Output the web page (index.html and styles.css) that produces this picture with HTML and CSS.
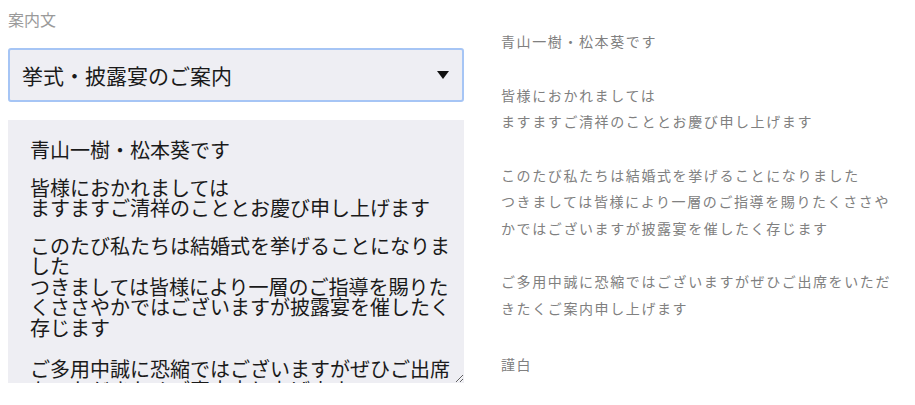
FILE: index.html
```html
<!DOCTYPE html>
<html>
<head>
    <meta charset="utf-8"/>
    <title>案内文</title>
    <link rel="stylesheet" href="styles.css">
</head>
<body>
    <div id="app">
        <div class="editor">
            <label class="field-label" for="template">案内文</label>
            <div class="select-wrap">
                <select id="template" class="template-select">
                    <option>挙式・披露宴のご案内</option>
                    <option>披露宴のご案内</option>
                    <option>1.5次会のご案内</option>
                </select>
            </div>
            <div class="memo">
                <p>青山一樹・松本葵です</p>
                <p>皆様におかれましては<br>ますますご清祥のこととお慶び申し上げます</p>
                <p class="long">このたび私たちは結婚式を挙げることになりました<br>つきましては皆様により一層のご指導を賜りたくささやかではございますが披露宴を催したく存じます</p>
                <p>ご多用中誠に恐縮ではございますがぜひご出席をいただきたくご案内申し上げます</p>
                <p>謹白</p>
            </div>
        </div>
        <div class="preview">
            <p>青山一樹・松本葵です</p>
            <p>皆様におかれましては<br>ますますご清祥のこととお慶び申し上げます</p>
            <p>このたび私たちは結婚式を挙げることになりました<br>つきましては皆様により一層のご指導を賜りたくささやかではございますが披露宴を催したく存じます</p>
            <p>ご多用中誠に恐縮ではございますがぜひご出席をいただきたくご案内申し上げます</p>
            <p class="closing">謹白</p>
        </div>
    </div>
</body>
</html>
```

FILE: styles.css
```css
body {
    margin: 0;
    font-family: "Noto Sans CJK JP", "Noto Sans", sans-serif;
    background-color: white;
    color: #111;
}
#app {
    display: flex;
    align-items: flex-start;
    gap: 37px;
    padding-left: 8px;
}
.editor {
    width: 456px;
    display: flex;
    flex-direction: column;
}
.field-label {
    margin-top: 8px;
    font-size: 16px;
    line-height: 22px;
    color: #9a9a9a;
}
.select-wrap {
    position: relative;
    margin-top: 18px;
}
.select-wrap::after {
    content: "";
    position: absolute;
    right: 15px;
    top: 23px;
    border-left: 6px solid transparent;
    border-right: 6px solid transparent;
    border-top: 8px solid #111;
    pointer-events: none;
}
.template-select {
    appearance: none;
    -webkit-appearance: none;
    width: 100%;
    height: 54px;
    margin: 0;
    padding: 0 40px 0 12px;
    border: 2px solid #a6c5f5;
    border-radius: 3px;
    background-color: #eeeef3;
    font-family: inherit;
    font-size: 21px;
    color: #1a1a1a;
    outline: none;
}
.memo {
    margin-top: 18px;
    height: 263px;
    box-sizing: border-box;
    padding: 20px 12px 0 22px;
    background-color: #eeeef3;
    font-size: 20px;
    line-height: 20.5px;
    color: #1a1a1a;
    overflow: hidden;
    resize: vertical;
}
.memo p {
    margin: 0 0 17px;
}
.memo .long {
    margin-bottom: 21px;
}
.preview {
    width: 398px;
    padding-top: 28px;
    font-size: 14px;
    line-height: 26.5px;
    letter-spacing: 1.6px;
    color: #808080;
}
.preview p {
    margin: 0 0 27px;
}
.preview .closing {
    margin-top: 30px;
}
```
